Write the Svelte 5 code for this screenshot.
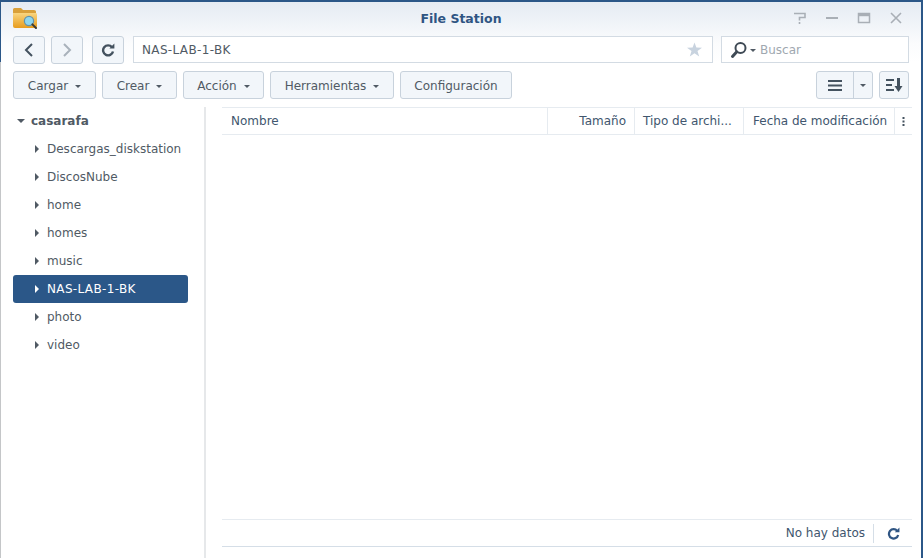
<script>
  const menus = [
    { label: 'Cargar', width: 83, caret: true },
    { label: 'Crear', width: 75, caret: true },
    { label: 'Acción', width: 81, caret: true },
    { label: 'Herramientas', width: 124, caret: true },
    { label: 'Configuración', width: 112, caret: false }
  ];
  const folders = ['Descargas_diskstation', 'DiscosNube', 'home', 'homes', 'music', 'NAS-LAB-1-BK', 'photo', 'video'];
  const selected = 'NAS-LAB-1-BK';
  const columns = [
    { label: 'Nombre', cls: 'name' },
    { label: 'Tamaño', cls: 'size' },
    { label: 'Tipo de archi...', cls: 'type' },
    { label: 'Fecha de modificación', cls: 'date' }
  ];
</script>

<div class="window">
  <header class="titlebar">
    <svg class="app-icon" width="26" height="22" viewBox="0 0 26 22">
      <defs>
        <linearGradient id="fold" x1="0" y1="0" x2="0" y2="1">
          <stop offset="0" stop-color="#f9d57f" />
          <stop offset="1" stop-color="#e79c1e" />
        </linearGradient>
      </defs>
      <path d="M1 2.5 Q1 1 2.5 1 H9 L11 3 H22 Q24 3 24 4.5 V8 H1 Z" fill="#d9a03a" />
      <path d="M1 6 H24 Q25 6 25 7.5 V19 Q25 21 23 21 H3 Q1 21 1 19 Z" fill="url(#fold)" />
      <circle cx="17" cy="14" r="4.6" fill="#8fd6ee" stroke="#5f93ae" stroke-width="1.2" />
      <path d="M20.4 17.4 L24 21" stroke="#3d3a33" stroke-width="2" stroke-linecap="round" />
    </svg>
    <div class="title">File Station</div>
    <div class="win-buttons">
      <svg width="14" height="14" viewBox="0 0 14 14" fill="none" stroke="#a9afb6" stroke-width="1.6">
        <path d="M1 2.5 H12 V6.5 H6.5 V9.5" />
        <path d="M6.5 11 V13" />
      </svg>
      <svg width="14" height="14" viewBox="0 0 14 14" fill="none" stroke="#a9afb6" stroke-width="2">
        <path d="M1 7 H13" />
      </svg>
      <svg width="14" height="14" viewBox="0 0 14 14" fill="none" stroke="#a9afb6">
        <rect x="1.5" y="2.5" width="11" height="9" stroke-width="1.5" />
        <path d="M1.5 4 H12.5" stroke-width="2.4" />
      </svg>
      <svg width="14" height="14" viewBox="0 0 14 14" fill="none" stroke="#a9afb6" stroke-width="1.6">
        <path d="M2 2 L12 12 M12 2 L2 12" />
      </svg>
    </div>
  </header>

  <div class="toolbar nav">
    <button class="btn square" aria-label="Atrás">
      <svg width="10" height="14" viewBox="0 0 10 14" fill="none" stroke="#44525f" stroke-width="2"><path d="M8 1 L2 7 L8 13" /></svg>
    </button>
    <button class="btn square" aria-label="Adelante">
      <svg width="10" height="14" viewBox="0 0 10 14" fill="none" stroke="#a9b2bb" stroke-width="2"><path d="M2 1 L8 7 L2 13" /></svg>
    </button>
    <button class="btn square refresh" aria-label="Actualizar">
      <svg width="14" height="14" viewBox="0 0 14 14" fill="none"><path d="M11 4.2 A5 5 0 1 0 12 8.5" stroke="#44525f" stroke-width="2.4" /><path d="M8.4 5.6 H13.4 V0.6 Z" fill="#44525f" /></svg>
    </button>
    <div class="path">
      <span class="wide">NAS-LAB-1-BK</span>
      <svg width="15" height="15" viewBox="0 0 16 15"><path d="M8 0 L10 5.4 L16 5.6 L11.2 9.2 L13 15 L8 11.6 L3 15 L4.8 9.2 L0 5.6 L6 5.4 Z" fill="#c8d3df" /></svg>
    </div>
    <div class="search">
      <svg width="18" height="18" viewBox="0 0 18 18" fill="none"><circle cx="10.5" cy="7" r="5" stroke="#3f4a55" stroke-width="2" /><path d="M6.8 10.8 L2.5 15.5" stroke="#3f4a55" stroke-width="3" stroke-linecap="round" /></svg>
      <i class="caret small"></i>
      <span>Buscar</span>
    </div>
  </div>

  <div class="toolbar actions">
    {#each menus as m}
      <button class="btn menu" style:width="{m.width}px">{m.label}{#if m.caret}<i class="caret"></i>{/if}</button>
    {/each}
    <div class="spacer"></div>
    <div class="btn group">
      <span class="seg list">
        <svg width="14" height="11" viewBox="0 0 14 11" fill="#44525f"><rect y="0" width="14" height="2" /><rect y="4.5" width="14" height="2" /><rect y="9" width="14" height="2" /></svg>
      </span>
      <span class="seg drop"><i class="caret"></i></span>
    </div>
    <button class="btn sort" aria-label="Ordenar">
      <svg width="17" height="14" viewBox="0 0 17 14" fill="#44525f"><rect y="1" width="8" height="2" /><rect y="6" width="6" height="2" /><rect y="11" width="8" height="2" /><rect x="11" y="0" width="3" height="9" /><path d="M8.5 8 H16.5 L12.5 14 Z" /></svg>
    </button>
  </div>

  <div class="main">
    <aside class="tree">
      <div class="root"><i class="tri down"></i>casarafa</div>
      {#each folders as f}
        <div class="node" class:sel={f === selected}><i class="tri"></i>{f}</div>
      {/each}
    </aside>
    <section class="grid">
      <div class="head">
        {#each columns as c}
          <div class="col {c.cls}">{c.label}</div>
        {/each}
        <div class="col more"><svg width="3" height="9" viewBox="0 0 3 9" fill="#44525f"><rect x="0.5" y="0" width="2" height="2" /><rect x="0.5" y="3.5" width="2" height="2" /><rect x="0.5" y="7" width="2" height="2" /></svg></div>
      </div>
      <div class="body"></div>
      <div class="foot">
        <span>No hay datos</span>
        <div class="foot-refresh">
          <svg width="13" height="13" viewBox="0 0 14 14" fill="none"><path d="M11 4.2 A5 5 0 1 0 12 8.5" stroke="#2f5583" stroke-width="2.4" /><path d="M8.4 5.6 H13.4 V0.6 Z" fill="#2f5583" /></svg>
        </div>
      </div>
    </section>
  </div>
</div>

<style>
  :global(body) {
    margin: 0;
    background: #fff;
  }

  .window {
    box-sizing: border-box;
    width: 923px;
    height: 558px;
    display: flex;
    flex-direction: column;
    border-top: 2px solid #2b5788;
    border-right: 2px solid #2b5788;
    border-left: 1px solid #c4c6c8;
    background: linear-gradient(#e5ebf3 0, #fbfcfd 42px, #fff 60px);
    font-family: "DejaVu Sans", sans-serif;
    font-size: 12px;
    color: #505a64;
    position: relative;
  }
  .window::before {
    content: '';
    position: absolute;
    left: -1px;
    top: -2px;
    width: 1px;
    height: 62px;
    background: #2b5788;
  }

  .titlebar {
    height: 28px;
    display: flex;
    align-items: center;
    position: relative;
    padding: 0 0 0 11px;
    flex: none;
  }
  .app-icon {
    margin-top: 4px;
  }
  .title {
    position: absolute;
    left: 0;
    right: 0;
    margin-top: 4px;
    text-align: center;
    font-weight: bold;
    font-size: 12.5px;
    color: #2f5583;
  }
  .win-buttons {
    margin-left: auto;
    margin-top: 4px;
    margin-right: 18px;
    display: flex;
    gap: 18px;
    position: relative;
  }

  .toolbar {
    display: flex;
    padding: 0 12px;
    flex: none;
  }
  .nav {
    margin-top: 6px;
    height: 28px;
    gap: 6px;
  }
  .actions {
    margin-top: 7px;
    height: 28px;
    gap: 6px;
  }
  .spacer {
    flex: 1;
  }

  .btn {
    box-sizing: border-box;
    height: 28px;
    border: 1px solid #c8d2dc;
    border-radius: 3px;
    background: #f2f6fa;
    font: inherit;
    color: #505a64;
    padding: 0;
    display: flex;
    align-items: center;
    justify-content: center;
  }
  .square {
    width: 32px;
  }
  .refresh {
    margin-left: 3px;
  }
  .menu {
    padding-top: 1px;
    white-space: nowrap;
  }

  .caret {
    display: inline-block;
    width: 0;
    height: 0;
    margin-left: 7px;
    margin-top: 1px;
    border-left: 3.5px solid transparent;
    border-right: 3.5px solid transparent;
    border-top: 3.5px solid #505a64;
  }

  .path,
  .search {
    box-sizing: border-box;
    height: 27px;
    background: #fff;
    border: 1px solid #d3dbe3;
    display: flex;
    align-items: center;
  }
  .path {
    width: 580px;
    margin-left: 3px;
    padding: 0 10px 0 8px;
    justify-content: space-between;
  }
  .wide {
    letter-spacing: 0.35px;
  }
  .search {
    width: 188px;
    margin-left: 2px;
    padding-left: 8px;
    color: #a0a8b0;
  }
  .search .caret {
    margin: 1px 4px 0 2px;
  }

  .group {
    width: 57px;
    justify-content: flex-start;
  }
  .seg {
    display: flex;
    align-items: center;
    justify-content: center;
    height: 100%;
  }
  .list {
    width: 36px;
    border-right: 1px solid #c8d2dc;
  }
  .drop {
    flex: 1;
  }
  .drop .caret {
    margin: 1px 0 0;
  }
  .sort {
    width: 30px;
  }

  .main {
    flex: 1;
    min-height: 0;
    display: flex;
    margin-top: 8px;
  }

  .tree {
    box-sizing: border-box;
    width: 205px;
    flex: none;
    padding: 0 16px 0 12px;
    border-right: 2px solid #e6e8ea;
  }
  .root,
  .node {
    height: 28px;
    display: flex;
    align-items: center;
    position: relative;
  }
  .root {
    font-weight: bold;
    padding-left: 18px;
  }
  .node {
    padding-left: 34px;
    border-radius: 3px;
  }
  .sel {
    background: #2b5788;
    color: #fff;
    letter-spacing: 0.35px;
  }
  .tri {
    position: absolute;
    left: 22px;
    top: 10px;
    width: 0;
    height: 0;
    border-top: 4px solid transparent;
    border-bottom: 4px solid transparent;
    border-left: 4px solid #505a64;
  }
  .sel .tri {
    border-left-color: #fff;
  }
  .tri.down {
    left: 4px;
    top: 12px;
    border-left: 4px solid transparent;
    border-right: 4px solid transparent;
    border-top: 4px solid #505a64;
    border-bottom: 0;
  }

  .grid {
    flex: 1;
    min-width: 0;
    display: flex;
    flex-direction: column;
    margin-left: 16px;
    margin-right: 9px;
    margin-bottom: 11px;
  }
  .head {
    height: 28px;
    box-sizing: border-box;
    display: flex;
    border-top: 1px solid #e6ebf0;
    border-bottom: 1px solid #e6ebf0;
    color: #41566e;
    flex: none;
  }
  .col {
    box-sizing: border-box;
    display: flex;
    align-items: center;
    padding: 0 8px;
    border-right: 1px solid #e6ebf0;
    white-space: nowrap;
    overflow: hidden;
  }
  .name {
    width: 326px;
    padding-left: 9px;
  }
  .size {
    width: 87px;
    justify-content: flex-end;
  }
  .type {
    width: 109px;
  }
  .date {
    width: 151px;
    padding: 0 0 0 9px;
  }
  .more {
    flex: 1;
    border-right: 0;
    padding: 0;
    justify-content: center;
  }
  .body {
    flex: 1;
  }
  .foot {
    height: 28px;
    box-sizing: border-box;
    display: flex;
    align-items: center;
    justify-content: flex-end;
    border-top: 1px solid #e6ebf0;
    border-bottom: 1px solid #d5dee7;
    color: #41566e;
    flex: none;
  }
  .foot-refresh {
    margin-left: 8px;
    width: 39px;
    height: 19px;
    box-sizing: border-box;
    border-left: 1px solid #d5dee7;
    display: flex;
    align-items: center;
    justify-content: center;
  }
</style>
